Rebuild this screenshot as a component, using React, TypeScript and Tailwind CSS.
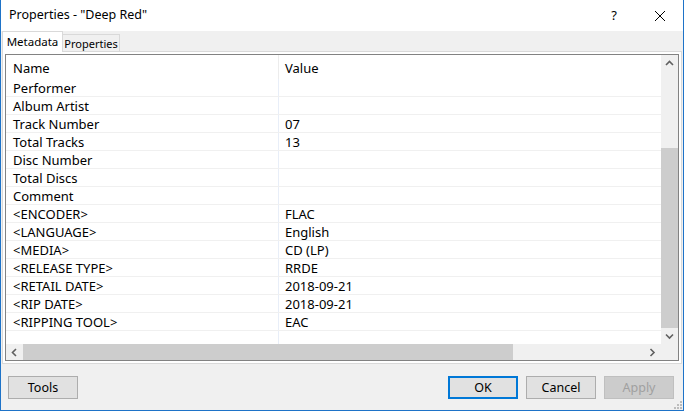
import React from "react";

const rows: [string, string][] = [
  ["Performer", ""],
  ["Album Artist", ""],
  ["Track Number", "07"],
  ["Total Tracks", "13"],
  ["Disc Number", ""],
  ["Total Discs", ""],
  ["Comment", ""],
  ["<ENCODER>", "FLAC"],
  ["<LANGUAGE>", "English"],
  ["<MEDIA>", "CD (LP)"],
  ["<RELEASE TYPE>", "RRDE"],
  ["<RETAIL DATE>", "2018-09-21"],
  ["<RIP DATE>", "2018-09-21"],
  ["<RIPPING TOOL>", "EAC"],
  ["", ""],
];

function Chevron({ dir }: { dir: "up" | "down" | "left" | "right" }) {
  const paths: Record<string, string> = {
    up: "M1 6 L4.5 2.5 L8 6",
    down: "M1 2.5 L4.5 6 L8 2.5",
    left: "M6 1 L2.5 4.5 L6 8",
    right: "M2.5 1 L6 4.5 L2.5 8",
  };
  return (
    <svg width="9" height="9" viewBox="0 0 9 9">
      <path d={paths[dir]} fill="none" stroke="#606060" strokeWidth="1.6" />
    </svg>
  );
}

function Btn({ label, variant }: { label: string; variant?: "default" | "disabled" }) {
  const cls =
    variant === "default"
      ? "border-2 border-[#0078d7] bg-[#e1e1e1] text-black"
      : variant === "disabled"
      ? "border border-[#bfbfbf] bg-[#cccccc] text-[#a0a0a0]"
      : "border border-[#adadad] bg-[#e1e1e1] text-black";
  return (
    <div className={`w-[70px] h-[23px] flex items-center justify-center text-[12.5px] leading-none pt-[2px] ${cls}`}>
      {label}
    </div>
  );
}

export default function App() {
  return (
    <div
      className="w-[684px] h-[411px] bg-[#f0f0f0] border-l border-r border-b border-[#1e73c8] flex flex-col overflow-hidden text-[#000]"
      style={{ fontFamily: '"Noto Sans", "Open Sans", sans-serif' }}
    >
      {/* Title bar */}
      <div className="h-[31px] bg-white flex items-center shrink-0">
        <div className="pl-[8px] text-[12.5px] leading-none">Properties - "Deep Red"</div>
        <div className="ml-auto flex items-center">
          <div className="w-[46px] flex justify-center text-[13px] leading-none">?</div>
          <div className="w-[46px] flex justify-center">
            <svg width="12" height="12" viewBox="0 0 12 12">
              <path d="M1 1 L11 11 M11 1 L1 11" stroke="#000" strokeWidth="1" />
            </svg>
          </div>
        </div>
      </div>

      {/* Tabs */}
      <div className="h-[20px] flex items-end pl-[1px] shrink-0 relative z-10">
        <div className="w-[61px] h-[21px] bg-white border border-b-0 border-[#d9d9d9] flex items-center justify-center text-[11.5px] leading-none mb-[-1px]">
          Metadata
        </div>
        <div className="w-[57px] h-[17px] bg-[#f0f0f0] border border-l-0 border-b-0 border-[#d9d9d9] flex items-center justify-center text-[11px] leading-none pt-[1px]">
          Properties
        </div>
      </div>

      {/* Panel */}
      <div className="mx-[1px] h-[313px] border border-[#d9d9d9] bg-white p-[2px] shrink-0 flex">
        <div className="flex-1 border border-[#828282] flex flex-col overflow-hidden">
          <div className="flex flex-1 min-h-0">
            {/* List */}
            <div className="flex-1 flex flex-col overflow-hidden text-[13px]">
              <div className="h-[24px] flex items-center shrink-0">
                <div className="w-[273px] pl-[7px] pt-[2px] h-full flex items-center border-r border-[#ececec] leading-none">Name</div>
                <div className="pl-[6px] pt-[2px] leading-none">Value</div>
              </div>
              {rows.map(([n, v], i) => (
                <div key={i} className="h-[18px] flex shrink-0 border-b border-[#f0f0f0]">
                  <div className="w-[273px] pl-[7px] pt-[1px] flex items-center border-r border-[#e8eef8] leading-none">{n}</div>
                  <div className="pl-[6px] pt-[1px] flex items-center leading-none">{v}</div>
                </div>
              ))}
            </div>
            {/* Vertical scrollbar */}
            <div className="w-[17px] bg-[#f0f0f0] flex flex-col shrink-0">
              <div className="h-[17px] flex items-center justify-center">
                <Chevron dir="up" />
              </div>
              <div className="flex-1 flex flex-col">
                <div className="h-[77px]" />
                <div className="h-[180px] bg-[#cdcdcd]" />
                <div className="flex-1" />
              </div>
              <div className="h-[17px] flex items-center justify-center">
                <Chevron dir="down" />
              </div>
            </div>
          </div>
          {/* Horizontal scrollbar */}
          <div className="h-[16px] flex shrink-0">
            <div className="flex-1 bg-[#f0f0f0] flex items-stretch">
              <div className="w-[17px] flex items-center justify-center">
                <Chevron dir="left" />
              </div>
              <div className="w-[490px] bg-[#cdcdcd]" />
              <div className="flex-1" />
              <div className="w-[17px] flex items-center justify-center">
                <Chevron dir="right" />
              </div>
            </div>
            <div className="w-[17px] bg-[#f0f0f0]" />
          </div>
        </div>
      </div>

      {/* Bottom buttons */}
      <div className="flex-1 relative flex items-start pt-[12px] pl-[7px] pr-[9px]">
        <Btn label="Tools" />
        <div className="ml-auto flex gap-[8px]">
          <Btn label="OK" variant="default" />
          <Btn label="Cancel" />
          <Btn label="Apply" variant="disabled" />
        </div>
        <svg className="absolute right-[1px] bottom-[1px]" width="8" height="8" viewBox="0 0 8 8">
          <rect x="6" y="0" width="2" height="2" fill="#bcbcbc" />
          <rect x="3" y="3" width="2" height="2" fill="#bcbcbc" />
          <rect x="6" y="3" width="2" height="2" fill="#bcbcbc" />
          <rect x="0" y="6" width="2" height="2" fill="#bcbcbc" />
          <rect x="3" y="6" width="2" height="2" fill="#bcbcbc" />
          <rect x="6" y="6" width="2" height="2" fill="#bcbcbc" />
        </svg>
      </div>
    </div>
  );
}
